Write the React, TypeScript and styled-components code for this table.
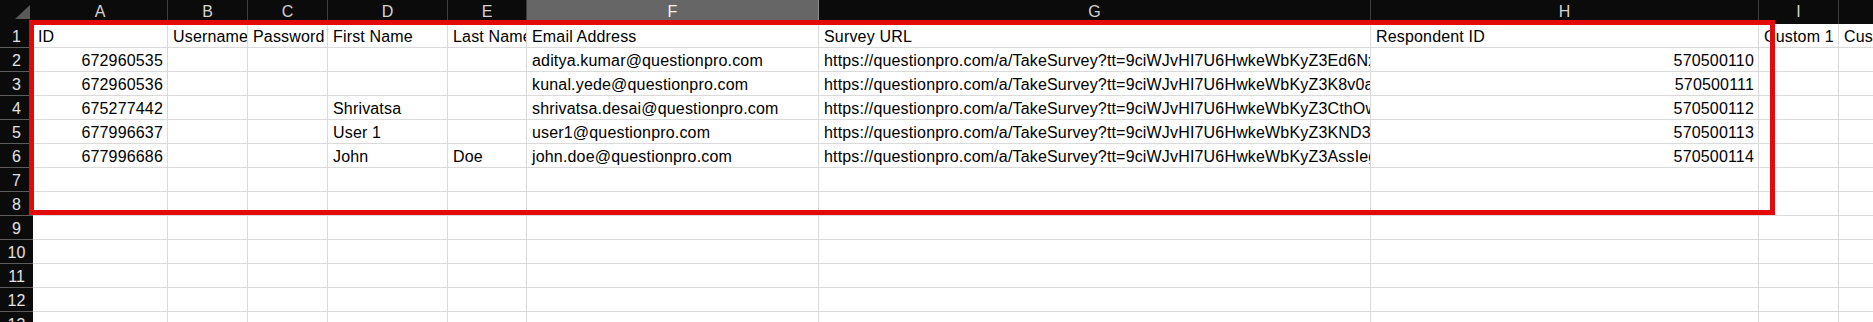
import React from 'react';
import styled, { createGlobalStyle } from 'styled-components';

const GlobalStyle = createGlobalStyle`
    html, body{
        margin: 0;
        padding: 0;
        background: #ffffff;
        overflow: hidden;
    }
    body{
        font-family: "Liberation Sans", Arial, sans-serif;
    }
`;

const COLUMNS = [
    { letter: 'A', width: 135 },
    { letter: 'B', width: 80 },
    { letter: 'C', width: 80 },
    { letter: 'D', width: 120 },
    { letter: 'E', width: 79 },
    { letter: 'F', width: 292 },
    { letter: 'G', width: 552 },
    { letter: 'H', width: 388 },
    { letter: 'I', width: 80 },
    { letter: 'J', width: 80 },
];

const SELECTED_COLUMN = 'F';
const ROW_COUNT = 13;

// numbers are right aligned like Excel does for numeric cells
const NUMERIC_COLUMNS = [0, 7];

const URL_BASE = 'https://questionpro.com/a/TakeSurvey?tt=9ciWJvHI7U6HwkeWbKyZ3';

const DATA: string[][] = [
    ['ID', 'Username', 'Password', 'First Name', 'Last Name', 'Email Address', 'Survey URL', 'Respondent ID', 'Custom 1', 'Custom 2'],
    ['672960535', '', '', '', '', 'aditya.kumar@questionpro.com', URL_BASE + 'Ed6NxQ%3D%3D', '570500110', '', ''],
    ['672960536', '', '', '', '', 'kunal.yede@questionpro.com', URL_BASE + 'K8v0aQ%3D%3D', '570500111', '', ''],
    ['675277442', '', '', 'Shrivatsa', '', 'shrivatsa.desai@questionpro.com', URL_BASE + 'CthOwA%3D%3D', '570500112', '', ''],
    ['677996637', '', '', 'User 1', '', 'user1@questionpro.com', URL_BASE + 'KND3bw%3D%3D', '570500113', '', ''],
    ['677996686', '', '', 'John', 'Doe', 'john.doe@questionpro.com', URL_BASE + 'AssIeg%3D%3D', '570500114', '', ''],
];

const Wrapper = styled.div`
    position: relative;
    width: 1873px;
    height: 322px;
    overflow: hidden;
    background: #ffffff;
`;

const Sheet = styled.div`
    display: grid;
    grid-template-columns: 33px ${COLUMNS.map(c => c.width + 'px').join(' ')} 1fr;
    grid-auto-rows: 24px;
    font-size: 16px;
`;

const Corner = styled.div`
    background: #0b0b0b;
    display: flex;
    align-items: flex-end;
    justify-content: flex-end;
    padding: 0 3px 5px 0;
    box-sizing: border-box;
    > svg{
        display: block;
    }
`;

const ColHeader = styled.div<{ $selected: boolean }>`
    background: ${p => p.$selected ? '#666666' : '#0b0b0b'};
    color: ${p => p.$selected ? '#f2f2f2' : '#d4d4d4'};
    border-right: 1px solid ${p => p.$selected ? '#8a8a8a' : '#3c3c3c'};
    box-sizing: border-box;
    text-align: center;
    line-height: 24px;
`;

const RowHeader = styled.div`
    background: #0b0b0b;
    color: #e2e2e2;
    border-bottom: 1px solid #5c5c5c;
    box-sizing: border-box;
    text-align: center;
    padding-top: 2px;
    line-height: 21px;
`;

const Cell = styled.div<{ $align: 'left' | 'right' }>`
    background: #ffffff;
    color: #000000;
    border-right: 1px solid #dadada;
    border-bottom: 1px solid #dadada;
    box-sizing: border-box;
    padding: 2px 4px 0 5px;
    line-height: 21px;
    letter-spacing: 0.17px;
    white-space: nowrap;
    overflow: hidden;
    text-align: ${p => p.$align};
`;

const Highlight = styled.div`
    position: absolute;
    left: 29px;
    top: 20px;
    width: 1746px;
    height: 195px;
    border: 5px solid #e50a0a;
    box-sizing: border-box;
    pointer-events: none;
`;

const App: React.FC = () => {
    const rows = Array.from({ length: ROW_COUNT }, (_, i) => DATA[i] || []);

    return (
    <Wrapper>
        <GlobalStyle />
        <Sheet>
            <Corner>
                <svg width="15" height="14" viewBox="0 0 15 14">
                    <polygon points="15,0 15,14 0,14" fill="#595959" />
                </svg>
            </Corner>
            {COLUMNS.map(col => (
                <ColHeader key={col.letter} $selected={col.letter === SELECTED_COLUMN}>{col.letter}</ColHeader>
            ))}
            <ColHeader $selected={false}>K</ColHeader>

            {rows.map((row, r) => (
                <React.Fragment key={r}>
                    <RowHeader>{r + 1}</RowHeader>
                    {COLUMNS.map((col, c) => (
                        <Cell
                            key={col.letter}
                            $align={r > 0 && NUMERIC_COLUMNS.includes(c) ? 'right' : 'left'}>
                            {row[c] || ''}
                        </Cell>
                    ))}
                    <Cell $align="left"></Cell>
                </React.Fragment>
            ))}
        </Sheet>
        <Highlight />
    </Wrapper>
  );
};

export default App;
